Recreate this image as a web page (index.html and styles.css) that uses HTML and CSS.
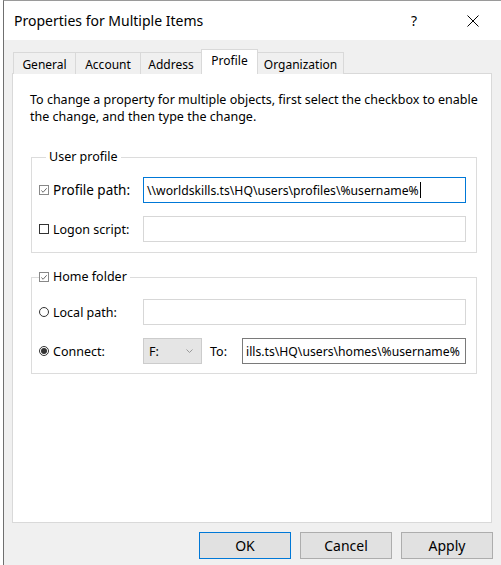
FILE: index.html
```html
<!DOCTYPE html>
<html>
<head>
<meta charset="utf-8">
<link rel="stylesheet" href="styles.css">
</head>
<body>
<div class="window">
  <div class="titlebar">
    <span class="title">Properties for Multiple Items</span>
    <span class="help">?</span>
    <span class="close"><svg width="12" height="12" viewBox="0 0 12 12"><path d="M0.5 0.5 L11.5 11.5 M11.5 0.5 L0.5 11.5" stroke="#000" stroke-width="1" fill="none"/></svg></span>
  </div>
  <div class="client">
    <div class="tabs">
      <div class="tab t-general">General</div>
      <div class="tab t-account">Account</div>
      <div class="tab t-address">Address</div>
      <div class="tab t-profile active">Profile</div>
      <div class="tab t-org">Organization</div>
    </div>
    <div class="panel">
      <p class="intro">To change a property for multiple objects, first select the checkbox to enable the change, and then type the change.</p>

      <fieldset class="group g-user">
        <legend class="legend">User profile</legend>
        <div class="row">
          <span class="lbl big"><span class="chk checked"><svg width="9" height="9" viewBox="0 0 9 9"><path d="M1.5 4.5 L3.5 6.5 L7.5 2" stroke="#555" stroke-width="1" fill="none"/></svg></span>Profile path:</span>
          <div class="field focus">\\worldskills.ts\HQ\users\profiles\%username%<span class="caret"></span></div>
        </div>
        <div class="row">
          <span class="lbl mid"><span class="chk"></span>Logon script:</span>
          <div class="field"></div>
        </div>
      </fieldset>

      <fieldset class="group g-home">
        <legend class="legend"><span class="chk checked"><svg width="9" height="9" viewBox="0 0 9 9"><path d="M1.5 4.5 L3.5 6.5 L7.5 2" stroke="#555" stroke-width="1" fill="none"/></svg></span>Home folder</legend>
        <div class="row">
          <span class="lbl"><span class="radio"></span>Local path:</span>
          <div class="field"></div>
        </div>
        <div class="row">
          <span class="lbl"><span class="radio on"><span class="dot"></span></span>Connect:</span>
          <div class="combo"><span>F:</span><svg width="7" height="4" viewBox="0 0 7 4"><path d="M0.5 0.5 L3.5 3.5 L6.5 0.5" stroke="#999" stroke-width="1" fill="none"/></svg></div>
          <span class="to">To:</span>
          <div class="field dark">ills.ts\HQ\users\homes\%username%</div>
        </div>
      </fieldset>
    </div>
    <div class="buttons">
      <div class="btn default">OK</div>
      <div class="btn">Cancel</div>
      <div class="btn">Apply</div>
    </div>
  </div>
</div>
</body>
</html>
```
FILE: styles.css
```css
* { box-sizing: border-box; }
html, body { margin: 0; padding: 0; background: #fff; }
body {
  font-family: "Noto Sans", "Liberation Sans", sans-serif;
  font-size: 12px;
  color: #000;
  width: 501px;
  height: 565px;
  overflow: hidden;
}
.window {
  margin-left: 3px;
  width: 498px;
  height: 565px;
  border-left: 1px solid #6f6f6f;
  border-top: 1px solid #9a9a9a;
  display: flex;
  flex-direction: column;
}
.titlebar {
  height: 39px;
  background: #fff;
  display: flex;
  align-items: center;
  padding-left: 10px;
}
.title { font-size: 14px; flex: 1; }
.help { font-size: 14px; width: 10px; margin-right: 46px; }
.close { width: 12px; height: 12px; margin-right: 22px; display: flex; }
.client {
  flex: 1;
  background: #f0f0f0;
  padding-top: 9px;
}
.tabs {
  display: flex;
  align-items: flex-end;
  height: 25px;
  margin-left: 9px;
  margin-bottom: -1px;
  position: relative;
  z-index: 1;
}
.tab {
  height: 22px;
  border: 1px solid #d9d9d9;
  border-bottom: none;
  background: #f0f0f0;
  display: flex;
  align-items: center;
  justify-content: center;
  padding-top: 1px;
  margin-right: -1px;
}
.t-general { width: 63px; }
.t-account { width: 66px; }
.t-address { width: 62px; }
.t-profile { width: 57px; }
.t-org { width: 87px; }
.tab.active {
  height: 25px;
  background: #fff;
  position: relative;
  z-index: 2;
  padding-top: 0;
  padding-bottom: 3px;
}
.panel {
  margin-left: 8px;
  width: 480px;
  height: 450px;
  background: #fff;
  border: 1px solid #d9d9d9;
  padding: 17px 0 0 17px;
}
.intro {
  margin: 0;
  line-height: 17px;
  width: 455px;
  font-size: 12.5px;
}
.group {
  margin: 0 0 0 1px;
  width: 446px;
  border: 1px solid #dcdcdc;
  padding: 12px 9px 10px 7px;
  min-width: 0;
}
.g-user { margin-top: 24px; }
.g-home { margin-top: 16px; padding-top: 14px; padding-bottom: 9px; }
.legend {
  padding: 0 3px;
  margin-left: 7px;
  line-height: 16px;
  display: flex;
  align-items: center;
  font-size: 12.5px;
}
.g-home .legend { margin-left: 0; padding-left: 0; }
.row {
  display: flex;
  align-items: center;
  height: 26px;
  margin-top: 13px;
}
.row:first-of-type { margin-top: 0; }
.lbl {
  width: 104px;
  display: flex;
  align-items: center;
  font-size: 12.5px;
  white-space: nowrap;
}
.lbl.big { font-size: 13.5px; }
.lbl.mid { font-size: 12.5px; }
.chk {
  width: 10px;
  height: 10px;
  border: 1px solid #333;
  margin-right: 4px;
  display: inline-flex;
  flex: none;
}
.chk.checked { border-color: #888; }
.radio {
  width: 10px;
  height: 10px;
  border: 1px solid #333;
  border-radius: 50%;
  margin-right: 4px;
  display: inline-flex;
  align-items: center;
  justify-content: center;
  flex: none;
}
.dot { width: 6px; height: 6px; border-radius: 50%; background: #333; }
.field {
  width: 323px;
  height: 26px;
  border: 1px solid #d7d7d7;
  background: #fff;
  padding-left: 3px;
  display: flex;
  align-items: center;
  white-space: nowrap;
  overflow: hidden;
  font-size: 12.2px;
}
.field.focus { border-color: #0078d7; }
.field.dark { border-color: #7a7a7a; width: 224px; }
.caret { width: 1px; height: 16px; background: #000; margin-left: 1px; }
.combo {
  width: 59px;
  height: 26px;
  background: #e5e5e5;
  border: 1px solid #cccccc;
  display: flex;
  align-items: center;
  justify-content: space-between;
  padding: 0 8px 0 5px;
  font-size: 12.5px;
}
.to { width: 40px; padding-left: 8px; font-size: 12.5px; }
.buttons {
  display: flex;
  justify-content: flex-end;
  gap: 9px;
  margin-top: 9px;
  padding-right: 8px;
}
.btn {
  width: 92px;
  height: 27px;
  background: #e1e1e1;
  border: 1px solid #adadad;
  display: flex;
  align-items: center;
  justify-content: center;
  font-size: 14px;
}
.btn.default { border-color: #0078d7; }
```
